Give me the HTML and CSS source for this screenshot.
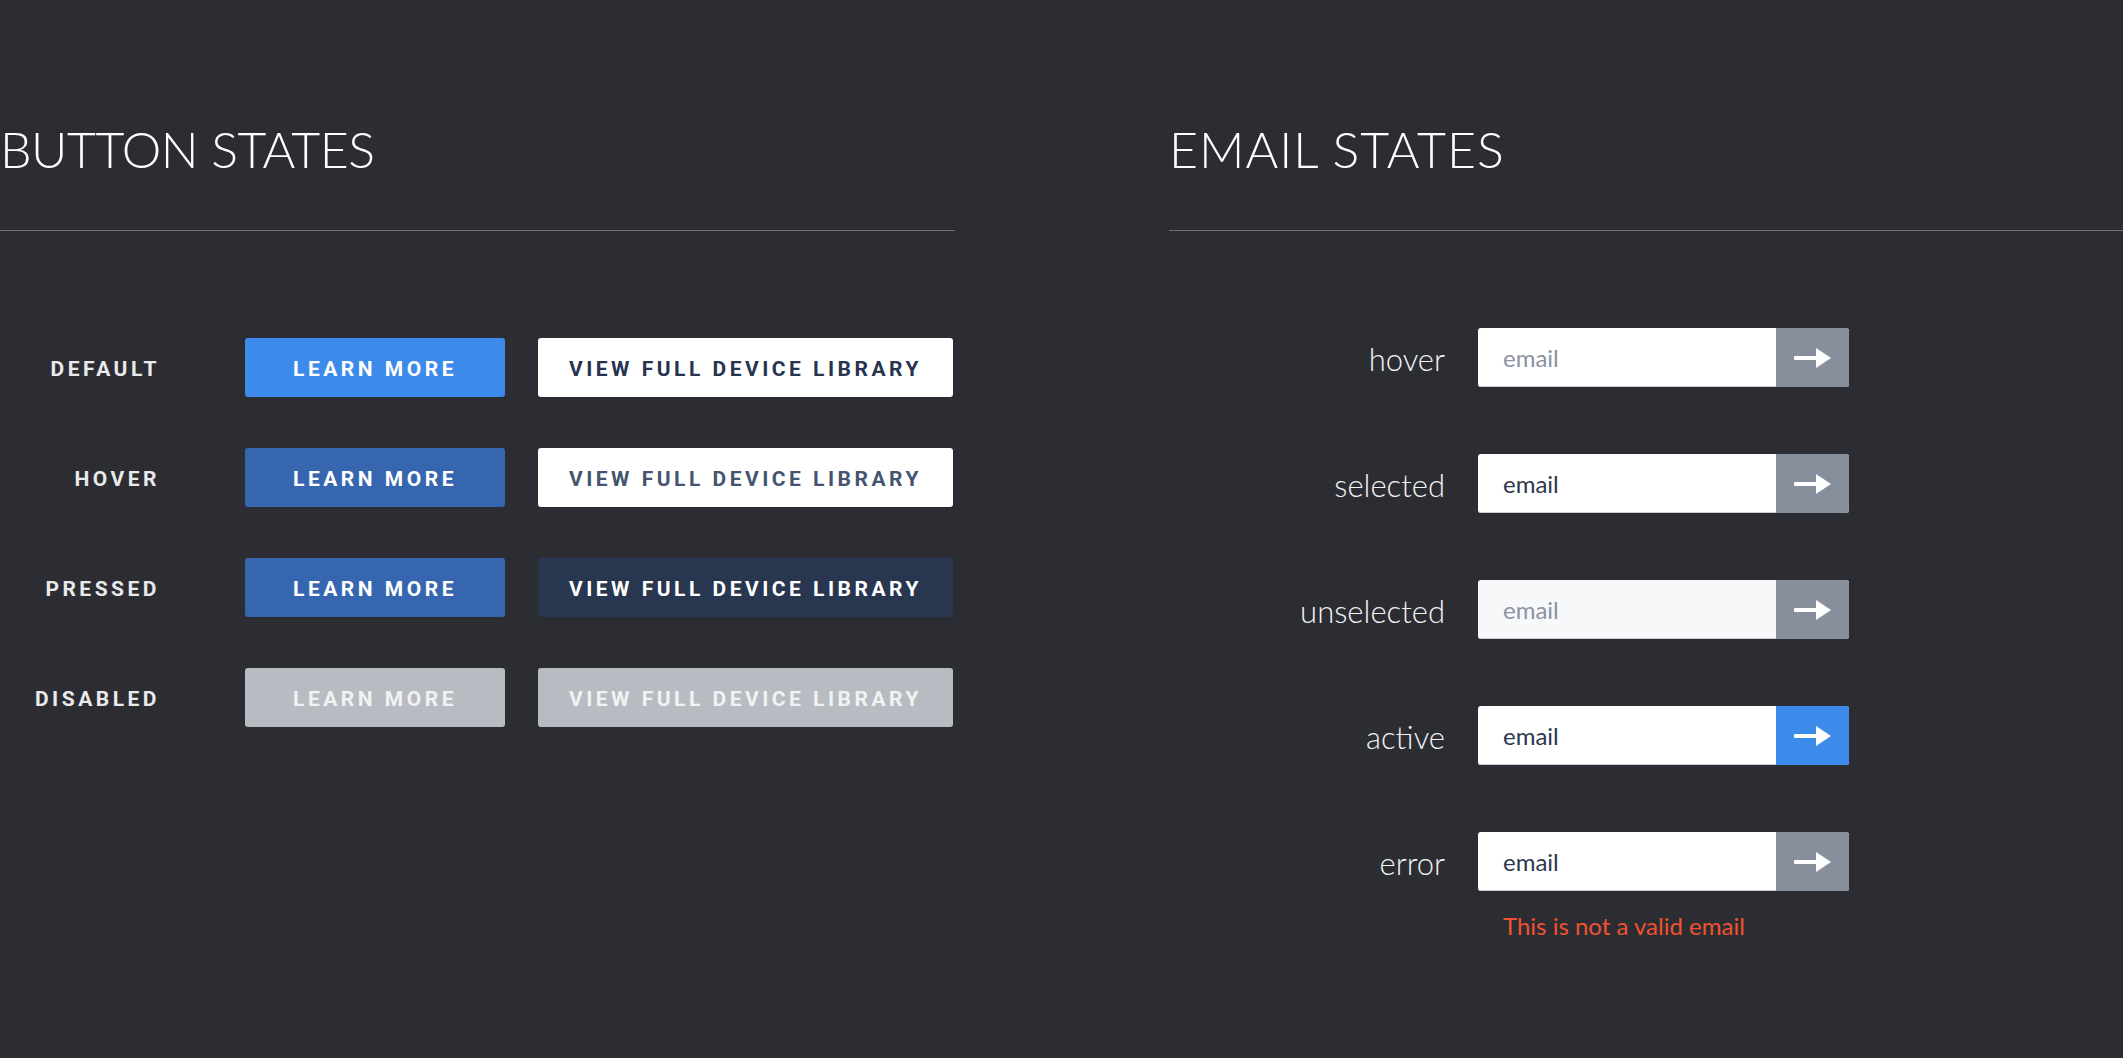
FILE: index.html
```html
<!DOCTYPE html>
<html lang="en">
<head>
<meta charset="utf-8">
<title>States</title>
<link rel="stylesheet" href="styles.css">
</head>
<body>
<div class="page">
  <section class="col col-buttons">
    <h1 class="heading">BUTTON STATES</h1>
    <div class="divider"></div>
    <div class="btn-rows">
      <div class="btn-row">
        <div class="state">DEFAULT</div>
        <div class="btn btn-primary">LEARN MORE</div>
        <div class="btn btn-wide btn-light">VIEW FULL DEVICE LIBRARY</div>
      </div>
      <div class="btn-row">
        <div class="state">HOVER</div>
        <div class="btn btn-primary-dark">LEARN MORE</div>
        <div class="btn btn-wide btn-light-hover">VIEW FULL DEVICE LIBRARY</div>
      </div>
      <div class="btn-row">
        <div class="state">PRESSED</div>
        <div class="btn btn-primary-dark">LEARN MORE</div>
        <div class="btn btn-wide btn-navy">VIEW FULL DEVICE LIBRARY</div>
      </div>
      <div class="btn-row">
        <div class="state">DISABLED</div>
        <div class="btn btn-disabled">LEARN MORE</div>
        <div class="btn btn-wide btn-disabled">VIEW FULL DEVICE LIBRARY</div>
      </div>
    </div>
  </section>
  <section class="col col-email">
    <h1 class="heading heading-email">EMAIL STATES</h1>
    <div class="divider"></div>
    <div class="email-rows">
      <div class="email-row">
        <div class="email-label">hover</div>
        <div class="field">
          <div class="field-text placeholder">email</div>
          <div class="field-go"><svg class="arrow" viewBox="0 0 37 20" width="37" height="20"><rect x="0" y="8" width="25" height="4" rx="1"/><polygon points="22,0 37,10 22,20"/></svg></div>
        </div>
      </div>
      <div class="email-row">
        <div class="email-label">selected</div>
        <div class="field">
          <div class="field-text">email</div>
          <div class="field-go"><svg class="arrow" viewBox="0 0 37 20" width="37" height="20"><rect x="0" y="8" width="25" height="4" rx="1"/><polygon points="22,0 37,10 22,20"/></svg></div>
        </div>
      </div>
      <div class="email-row">
        <div class="email-label">unselected</div>
        <div class="field field-muted">
          <div class="field-text placeholder">email</div>
          <div class="field-go"><svg class="arrow" viewBox="0 0 37 20" width="37" height="20"><rect x="0" y="8" width="25" height="4" rx="1"/><polygon points="22,0 37,10 22,20"/></svg></div>
        </div>
      </div>
      <div class="email-row">
        <div class="email-label">active</div>
        <div class="field">
          <div class="field-text">email</div>
          <div class="field-go field-go-active"><svg class="arrow" viewBox="0 0 37 20" width="37" height="20"><rect x="0" y="8" width="25" height="4" rx="1"/><polygon points="22,0 37,10 22,20"/></svg></div>
        </div>
      </div>
      <div class="email-row">
        <div class="email-label">error</div>
        <div class="field-wrap">
          <div class="field">
            <div class="field-text">email</div>
            <div class="field-go"><svg class="arrow" viewBox="0 0 37 20" width="37" height="20"><rect x="0" y="8" width="25" height="4" rx="1"/><polygon points="22,0 37,10 22,20"/></svg></div>
          </div>
          <div class="error-msg">This is not a valid email</div>
        </div>
      </div>
    </div>
  </section>
</div>
</body>
</html>
```

FILE: styles.css
```css
html, body {
  margin: 0;
  padding: 0;
  background: #2c2d32;
}

body {
  width: 2123px;
  height: 1058px;
  overflow: hidden;
  font-family: "Lato", "Open Sans", sans-serif;
  color: #ffffff;
}

.page {
  display: flex;
  align-items: flex-start;
  padding-top: 119px;
}

.col-buttons {
  width: 955px;
  flex: none;
}

.col-email {
  flex: 1;
  margin-left: 214px;
}

.heading {
  margin: 0;
  font-family: "Lato", sans-serif;
  font-weight: 300;
  font-size: 50px;
  line-height: 60px;
  letter-spacing: -0.5px;
  color: #ffffff;
}

.heading-email {
  letter-spacing: 1px;
}

.divider {
  margin-top: 51px;
  height: 1px;
  background: #707176;
}

/* Buttons */
.btn-rows {
  margin-top: 107px;
  display: flex;
  flex-direction: column;
  gap: 51px;
}

.btn-row {
  display: flex;
  align-items: center;
}

.state,
.btn {
  font-family: "Roboto", "Liberation Sans", sans-serif;
  font-weight: 700;
  font-size: 21px;
  letter-spacing: 3.5px;
}

.state {
  width: 160px;
  text-align: right;
  color: #e9eaec;
  margin-right: 85px;
  padding-top: 2px;
}

.btn {
  width: 260px;
  height: 59px;
  border-radius: 3px;
  display: flex;
  align-items: center;
  justify-content: center;
  padding-top: 3px;
  box-sizing: border-box;
}

.btn-wide {
  width: 415px;
  margin-left: 33px;
}

.btn-primary {
  background: #3c8aea;
  color: #ffffff;
}

.btn-primary-dark {
  background: #3766b1;
  color: #ffffff;
}

.btn-light {
  background: #ffffff;
  color: #27344f;
}

.btn-light-hover {
  background: #ffffff;
  color: #45546f;
}

.btn-navy {
  background: #28364f;
  color: #ffffff;
}

.btn-disabled {
  background: #b8bcc2;
  color: #f1f2f4;
}

/* Email */
.email-rows {
  margin-top: 97px;
  display: flex;
  flex-direction: column;
  gap: 67px;
}

.email-row {
  display: flex;
  align-items: flex-start;
}

.email-label {
  width: 276px;
  height: 59px;
  margin-right: 33px;
  display: flex;
  align-items: center;
  justify-content: flex-end;
  padding-top: 3px;
  box-sizing: border-box;
  font-family: "Lato", sans-serif;
  font-weight: 300;
  font-size: 31px;
  color: #f2f3f5;
}

.field {
  width: 371px;
  height: 59px;
  display: flex;
  border-radius: 3px;
  overflow: hidden;
  background: #ffffff;
  box-shadow: inset 0 -1px 0 #c9ccd2;
}

.field-muted {
  background: #f7f8fa;
}

.field-text {
  flex: 1;
  display: flex;
  align-items: center;
  padding-left: 25px;
  font-family: "Lato", sans-serif;
  font-size: 24px;
  color: #2c3850;
}

.field-text.placeholder {
  color: #8b93a2;
}

.field-go {
  width: 73px;
  flex: none;
  display: flex;
  align-items: center;
  justify-content: center;
  background: #878e9c;
}

.field-go-active {
  background: #3c8aea;
}

.arrow {
  fill: #ffffff;
  display: block;
}

.error-msg {
  margin-top: 21px;
  padding-left: 25px;
  font-family: "Lato", sans-serif;
  font-size: 24px;
  line-height: 28px;
  color: #f0522f;
}
```
